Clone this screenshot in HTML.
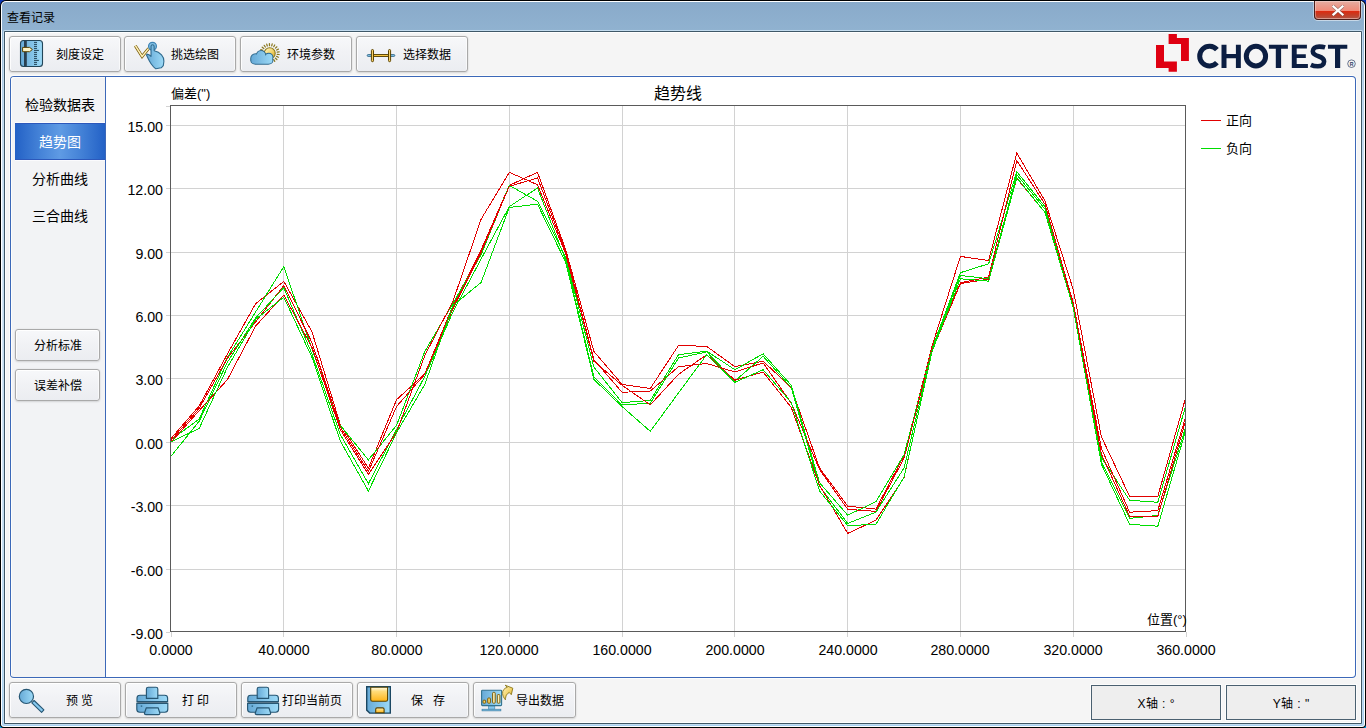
<!DOCTYPE html>
<html lang="zh-CN">
<head>
<meta charset="utf-8">
<title>查看记录</title>
<style>
html,body{margin:0;padding:0;}
body{width:1366px;height:728px;overflow:hidden;position:relative;background:linear-gradient(to bottom,#0a36b4 0,#0a36b4 50%,#00a2f0 50%,#00a2f0 100%);
  font-family:"Liberation Sans",sans-serif;font-size:12px;font-weight:300;color:#000;}
div,svg,span{position:absolute;}
/* ---------- window frame ---------- */
#w0{left:0;top:0;width:1366px;height:728px;background:#000;border-radius:6px 6px 4px 4px;}
#w1{left:1px;top:1px;width:1364px;height:726px;background:#fff;border-radius:5px 5px 3px 3px;}
#w2{left:2px;top:2px;width:1362px;height:724px;border-radius:4px 4px 2px 2px;
  background:linear-gradient(to bottom,#89aaca 0,#90b2d0 28px,#b4cfe8 90px,#d6e7f4 200px,#d2e5f4 480px,#a8d2f3 724px);}
#w3{left:3px;top:30px;width:1360px;height:695px;background:#c2dbee;border-radius:2px;}
#w4{left:4px;top:31px;width:1358px;height:693px;background:#3f5868;border-radius:1px;}
#client{left:5px;top:32px;width:1356px;height:691px;background:#f5f5f5;box-shadow:inset 0 0 0 1px #fff;}
#title{left:7px;top:10px;height:17px;line-height:17px;font-size:12px;white-space:nowrap;}
/* close button */
#close{left:1314px;top:1px;width:47px;height:19px;border:1px solid #4a1d1a;border-top:none;border-radius:0 0 4px 4px;
  background:linear-gradient(to bottom,#e5aea3 0,#ea9a8b 5px,#f18a78 9.6px,#df2a10 10px,#c9381f 13px,#b74d3a 16.5px,#cf7a68 18px);
  box-shadow:inset 0 0 0 1px rgba(255,255,255,.32),0 1px 0 0 rgba(255,255,255,.5),1px 0 0 0 rgba(255,255,255,.4),-1px 0 0 0 rgba(255,255,255,.4);box-sizing:border-box;}
#close svg{left:17px;top:3.6px;}
/* ---------- buttons ---------- */
.btn{height:36px;width:112px;border:1px solid #a9a9a9;border-radius:3px;box-sizing:border-box;
  background:linear-gradient(to bottom,#f7f8fa 0,#f1f2f5 45%,#ebedf1 100%);
  box-shadow:inset 0 1px 0 rgba(255,255,255,.95),inset 1px 0 0 rgba(255,255,255,.85),inset -1px 0 0 rgba(255,255,255,.6),0 1px 2px rgba(0,0,0,.11),0 0 2px rgba(0,0,0,.08);}
.btn span{top:1px;height:34px;line-height:35px;white-space:nowrap;font-size:12px;}
.btn svg{left:0;top:0;}
.sb{left:15px;width:85px;height:32px;}
.sb span{left:0;width:83px;text-align:center;height:30px;line-height:31px;}
/* ---------- main panel ---------- */
#panelo{left:9px;top:75px;width:1348px;height:604px;border-radius:5px;background:#fdfdfb;}
#panel{left:10px;top:76px;width:1346px;height:602px;border-radius:4px;background:#3c68b8;}
#side{left:11px;top:77px;width:94px;height:600px;background:#f2f3f5;border-radius:3px 0 0 3px;box-shadow:inset 1px 1px 0 #fdfdfb;}
#main{left:106px;top:77px;width:1249px;height:600px;background:#fff;border-radius:0 3px 3px 0;}
.nav{left:15px;width:90px;height:37px;line-height:39px;text-align:center;font-size:14px;}
.nav.sel{color:#fff;background:linear-gradient(to right,#2361c6 0,#4482d7 27%,#5f9be4 50%,#4482d7 73%,#2361c6 100%);box-shadow:inset 0 1px 0 #2c58bb,inset 0 -1px 0 #2c58bb,0 -1px 0 #fbfbfd,0 1px 0 #fbfbfd;}
/* ---------- chart ---------- */
#chart{left:0;top:0;}
.g{stroke:#d2d2d2;stroke-width:1;shape-rendering:crispEdges;}
.f{fill:none;stroke:#5a5a5a;stroke-width:1;shape-rendering:crispEdges;}
.r{fill:none;stroke:#e10000;stroke-width:1;shape-rendering:crispEdges;}
.n{fill:none;stroke:#00dd00;stroke-width:1;shape-rendering:crispEdges;}
.yl{left:106px;width:57px;text-align:right;font-size:14.2px;height:16px;line-height:16px;}
.xl{top:642px;width:80px;text-align:center;font-size:14.2px;height:16px;line-height:16px;}
.cj{font-size:13px;white-space:nowrap;height:16px;line-height:16px;}
.axb{top:685px;height:35px;width:130px;border:1px solid #4a6070;background:#eeeeee;box-sizing:border-box;
  text-align:center;line-height:37px;font-size:12px;box-shadow:0 0 0 1px #fcfcfc;}
.axb b{position:static;font-weight:inherit;padding:0 4.4px;}
</style>
</head>
<body>
<svg width="0" height="0" style="left:0;top:0"><defs><linearGradient id="gb" x1="0" x2="1" y1="0" y2="0"><stop offset="0" stop-color="#66a9d6"/><stop offset="1" stop-color="#9ddaf7"/></linearGradient><linearGradient id="gy" x1="0" x2="0" y1="0" y2="1"><stop offset="0" stop-color="#fffbe6"/><stop offset=".3" stop-color="#ffdc7a"/><stop offset="1" stop-color="#ffb416"/></linearGradient><linearGradient id="gs" x1="0" x2="1" y1="0" y2="1"><stop offset="0" stop-color="#fff6c8"/><stop offset=".55" stop-color="#f2d368"/><stop offset="1" stop-color="#cf9f24"/></linearGradient><linearGradient id="gv" x1="0" x2="1" y1="0" y2="0"><stop offset="0" stop-color="#ffe9a0"/><stop offset="1" stop-color="#f0b82e"/></linearGradient></defs></svg>
<div id="w0"></div><div id="w1"></div><div id="w2"></div><div id="w3"></div><div id="w4"></div>
<div id="client"></div>
<div id="title">查看记录</div>
<div id="close"><svg width="12" height="11" viewBox="0 0 12 11"><path d="M1.5 1.5 L10.5 9.5 M10.5 1.5 L1.5 9.5" stroke="#5a5050" stroke-width="3.4" stroke-linecap="square" opacity=".55"/><path d="M1.5 1.5 L10.5 9.5 M10.5 1.5 L1.5 9.5" stroke="#fff" stroke-width="2.2" stroke-linecap="square"/></svg></div>

<!-- top toolbar -->
<div class="btn" style="left:9px;top:36px"><svg width="110" height="34" viewBox="10 37 110 34"><rect x="20.5" y="40.5" width="22" height="26" rx="3" fill="url(#gb)" stroke="#234558" stroke-width="1.1"/><rect x="24" y="41" width="2.8" height="25" fill="#2a4050"/><path d="M34 42.4H37.0M34 44.4H37.0M34 46.4H37.0M34 48.4H37.0M34 50.4H38.9M34 52.4H37.0M34 54.4H37.0M34 56.4H37.0M34 58.4H37.0M34 60.4H38.9M34 62.4H37.0M34 64.4H37.0" stroke="#234558" stroke-width="1"/><path d="M22.6 47.4H29.6L32.4 49.5L29.6 51.7H22.6Z" fill="#fff4c6" stroke="#5a4300" stroke-width="1" stroke-linejoin="round"/></svg><span style="left:46px">刻度设定</span></div>
<div class="btn" style="left:124px;top:36px"><svg width="110" height="34" viewBox="125 37 110 34"><path d="M135.3 45.7L142.1 56.5L148.7 48.4" fill="none" stroke="#7a5c0a" stroke-width="3" stroke-linejoin="miter"/><path d="M135.3 45.7L142.1 56.5L148.7 48.4" fill="none" stroke="#fff2b8" stroke-width="1.5" stroke-linejoin="miter"/><circle cx="152.5" cy="46.3" r="3.9" fill="#86c3e8" stroke="#3f84b4" stroke-width="1.3"/><path d="M146.8 54.1C148.4 54.2 150 55.2 151 56.4L151 46.3C151 44.3 154.1 44.3 154.1 46.3L154.2 50.8C156.4 51.2 159.6 52.6 161.5 54.9C163.2 56.9 164.1 58.8 163.9 61.2L163.3 65.6L161.2 67.8L155.8 68.8L153.6 66.8C151.8 64.9 150.4 63 149.4 61C148.5 59.3 147.6 57.6 146.6 55.3Z" fill="url(#gb)" stroke="#2f6a8e" stroke-width="1.1" stroke-linejoin="round"/></svg><span style="left:46px">挑选绘图</span></div>
<div class="btn" style="left:240px;top:36px"><svg width="110" height="34" viewBox="241 37 110 34"><path d="M262.7 50.4L260.8 49.6M263.8 48.5L262.2 47.2M265.4 47.0L264.2 45.3M267.3 46.0L266.7 44.1M269.5 45.6L269.4 43.6M271.7 45.9L272.2 43.9M273.7 46.7L274.7 45.0M275.4 48.1L276.9 46.8M276.6 50.0L278.4 49.1M277.2 52.1L279.2 51.8M277.2 54.3L279.2 54.5M276.6 56.4L278.4 57.2M275.4 58.2L276.9 59.5M273.7 59.6L274.8 61.3" stroke="#8a7820" stroke-width="1.25" stroke-linecap="round"/><circle cx="269.7" cy="53.2" r="5.5" fill="url(#gs)" stroke="#8f7a1e" stroke-width="1.1"/><g fill="#2f6a8e" stroke="#2f6a8e" stroke-width="2"><circle cx="255.4" cy="58.5" r="4.2"/><circle cx="261.06" cy="55.3" r="4.2"/><circle cx="268.7" cy="57.4" r="3.75"/><rect x="251.3" y="57.2" width="21.1" height="6.5" rx="4.2" ry="3.2"/><rect x="255" y="56" width="13" height="5"/></g><clipPath id="cc"><circle cx="255.4" cy="58.5" r="4.2"/><circle cx="261.06" cy="55.3" r="4.2"/><circle cx="268.7" cy="57.4" r="3.75"/><rect x="251.3" y="57.2" width="21.1" height="6.5" rx="4.2" ry="3.2"/><rect x="255" y="56" width="13" height="5"/></clipPath><rect x="251" y="51" width="22" height="13" fill="url(#gb)" clip-path="url(#cc)"/></svg><span style="left:46px">环境参数</span></div>
<div class="btn" style="left:356px;top:36px"><svg width="110" height="34" viewBox="357 37 110 34"><rect x="367.2" y="54.6" width="27.6" height="1.8" rx=".9" fill="#8fcdf2" stroke="#2f6485" stroke-width=".9"/><rect x="373" y="54.55" width="16" height="1.9" fill="#f6c440" stroke="#5a4300" stroke-width=".9"/><rect x="371.4" y="49.5" width="2.1" height="12.2" rx="1.05" fill="url(#gv)" stroke="#5a4300" stroke-width="1"/><rect x="388.5" y="49.5" width="2.1" height="12.2" rx="1.05" fill="url(#gv)" stroke="#5a4300" stroke-width="1"/></svg><span style="left:46px">选择数据</span></div>

<svg width="220" height="46" viewBox="1146 30 220 46" style="left:1146px;top:30px"><path d="M1168.6 34.1H1176.9V38.1H1188.9V61.1H1181V43.9H1168.6Z" fill="#df0011"/><path d="M1156 44.9H1164V61.6H1176.9V71.7H1168.6V67.9H1156Z" fill="#df0011"/><g fill="none" stroke="#0b1e42"><path d="M1216.9 49.72A9.8 9.8 0 1 0 1216.9 62.58" stroke-width="5"/><ellipse cx="1255.95" cy="56.15" rx="9.65" ry="9.8" stroke-width="5"/><path d="M1325.1 47.4C1323.2 46.8 1321.2 46.6 1319.2 46.6C1315.2 46.6 1312.8 48.6 1312.8 51.3C1312.8 54.2 1315.4 55.3 1318.5 56.3C1321.6 57.3 1324.1 58.4 1324.1 61.5C1324.1 64.6 1321.4 66.3 1317.8 66.3C1315.2 66.3 1312.8 65.8 1310.9 64.9" stroke-width="4.6"/></g><g fill="#0b1e42"><path d="M1221.5 44.7h5v9.4h9.4v-9.4h4.95v23.2h-4.95v-9.7h-9.4v9.7h-5z"/><path d="M1268.9 44.7h19v3.95h-6.8v19.25h-5.3v-19.25h-6.9z"/><path d="M1291.8 44.7h15.1v3.9h-10.2v5.6h9.1v3.8h-9.1v6h11.2v3.9h-16.1z"/><path d="M1327.95 44.7h19.35v3.95h-7.1v19.25h-5.2v-19.25h-7.05z"/></g><circle cx="1351.5" cy="63.7" r="3.8" fill="none" stroke="#2c3c62" stroke-width=".7"/><text x="1349.7" y="65.6" font-family="Liberation Sans, sans-serif" font-weight="bold" font-size="5.2" fill="#2c3c62">R</text></svg>

<!-- main panel -->
<div id="panelo"></div><div id="panel"></div>
<div id="side"></div><div id="main"></div>
<div class="nav" style="top:86px">检验数据表</div>
<div class="nav sel" style="top:123px">趋势图</div>
<div class="nav" style="top:160px">分析曲线</div>
<div class="nav" style="top:197px">三合曲线</div>
<div class="btn sb" style="top:329px"><span>分析标准</span></div>
<div class="btn sb" style="top:369px"><span>误差补偿</span></div>

<!-- chart -->
<svg id="chart" width="1366" height="728" viewBox="0 0 1366 728">
<line x1="171" x2="1185" y1="125.5" y2="125.5" class="g"/>
<line x1="171" x2="1185" y1="188.5" y2="188.5" class="g"/>
<line x1="171" x2="1185" y1="252.5" y2="252.5" class="g"/>
<line x1="171" x2="1185" y1="315.5" y2="315.5" class="g"/>
<line x1="171" x2="1185" y1="378.5" y2="378.5" class="g"/>
<line x1="171" x2="1185" y1="442.5" y2="442.5" class="g"/>
<line x1="171" x2="1185" y1="505.5" y2="505.5" class="g"/>
<line x1="171" x2="1185" y1="569.5" y2="569.5" class="g"/>
<line x1="283.5" x2="283.5" y1="106" y2="631" class="g"/>
<line x1="396.5" x2="396.5" y1="106" y2="631" class="g"/>
<line x1="509.5" x2="509.5" y1="106" y2="631" class="g"/>
<line x1="622.5" x2="622.5" y1="106" y2="631" class="g"/>
<line x1="734.5" x2="734.5" y1="106" y2="631" class="g"/>
<line x1="847.5" x2="847.5" y1="106" y2="631" class="g"/>
<line x1="960.5" x2="960.5" y1="106" y2="631" class="g"/>
<line x1="1073.5" x2="1073.5" y1="106" y2="631" class="g"/>
<line x1="166" x2="170" y1="125.5" y2="125.5" class="g"/>
<line x1="166" x2="170" y1="188.5" y2="188.5" class="g"/>
<line x1="166" x2="170" y1="252.5" y2="252.5" class="g"/>
<line x1="166" x2="170" y1="315.5" y2="315.5" class="g"/>
<line x1="166" x2="170" y1="378.5" y2="378.5" class="g"/>
<line x1="166" x2="170" y1="442.5" y2="442.5" class="g"/>
<line x1="166" x2="170" y1="505.5" y2="505.5" class="g"/>
<line x1="166" x2="170" y1="569.5" y2="569.5" class="g"/>
<line x1="166" x2="170" y1="632.5" y2="632.5" class="g"/>
<line x1="166" x2="170" y1="106.5" y2="106.5" class="g"/>
<line x1="171.5" x2="171.5" y1="632" y2="637" class="g"/>
<line x1="283.5" x2="283.5" y1="632" y2="637" class="g"/>
<line x1="396.5" x2="396.5" y1="632" y2="637" class="g"/>
<line x1="509.5" x2="509.5" y1="632" y2="637" class="g"/>
<line x1="622.5" x2="622.5" y1="632" y2="637" class="g"/>
<line x1="734.5" x2="734.5" y1="632" y2="637" class="g"/>
<line x1="847.5" x2="847.5" y1="632" y2="637" class="g"/>
<line x1="960.5" x2="960.5" y1="632" y2="637" class="g"/>
<line x1="1073.5" x2="1073.5" y1="632" y2="637" class="g"/>
<line x1="1186.5" x2="1186.5" y1="632" y2="637" class="g"/>
<polyline class="r" points="171.0,438.5 199.2,406.0 227.4,354.0 255.6,303.7 283.8,281.4 312.0,331.8 340.2,424.4 368.4,468.1 396.6,399.6 424.8,373.9 452.9,305.6 481.1,249.9 509.3,185.4 537.5,172.3 565.7,249.7 593.9,351.5 622.1,384.4 650.3,388.5 678.5,345.4 706.7,346.4 734.9,366.7 763.1,361.2 791.3,387.6 819.5,467.9 847.7,506.1 875.9,509.1 904.1,455.4 932.2,345.6 960.4,256.4 988.6,260.6 1016.8,153.1 1045.0,200.9 1073.2,289.4 1101.4,436.8 1129.6,496.4 1157.8,496.4 1186.0,396.5"/>
<polyline class="n" points="171.0,440.0 199.2,418.9 227.4,357.4 255.6,312.0 283.8,266.6 312.0,349.2 340.2,425.2 368.4,459.9 396.6,425.2 424.8,351.5 452.9,303.5 481.1,254.7 509.3,185.4 537.5,201.3 565.7,257.1 593.9,367.1 622.1,402.6 650.3,400.5 678.5,354.7 706.7,351.1 734.9,369.7 763.1,353.8 791.3,385.3 819.5,482.7 847.7,515.2 875.9,501.7 904.1,454.6 932.2,347.9 960.4,272.7 988.6,263.8 1016.8,171.7 1045.0,206.8 1073.2,303.5 1101.4,457.5 1129.6,500.2 1157.8,502.3 1186.0,404.7"/>
<polyline class="r" points="171.0,440.4 199.2,408.3 227.4,358.2 255.6,321.9 283.8,285.6 312.0,342.6 340.2,426.9 368.4,471.5 396.6,406.4 424.8,374.3 452.9,308.8 481.1,252.4 509.3,186.3 537.5,178.0 565.7,251.8 593.9,359.7 622.1,392.3 650.3,391.0 678.5,366.7 706.7,363.5 734.9,372.0 763.1,362.9 791.3,403.2 819.5,469.4 847.7,509.3 875.9,511.4 904.1,458.0 932.2,348.7 960.4,282.8 988.6,277.1 1016.8,160.5 1045.0,204.2 1073.2,302.7 1101.4,448.4 1129.6,512.2 1157.8,510.6 1186.0,415.5"/>
<polyline class="n" points="171.0,456.3 199.2,421.2 227.4,362.3 255.6,317.9 283.8,287.7 312.0,354.0 340.2,434.3 368.4,483.7 396.6,429.4 424.8,376.4 452.9,312.0 481.1,259.0 509.3,206.6 537.5,188.0 565.7,260.2 593.9,377.0 622.1,404.9 650.3,403.2 678.5,358.0 706.7,351.9 734.9,381.1 763.1,356.3 791.3,387.6 819.5,486.3 847.7,523.4 875.9,512.2 904.1,467.9 932.2,349.4 960.4,275.4 988.6,278.8 1016.8,174.7 1045.0,209.1 1073.2,305.9 1101.4,461.5 1129.6,518.4 1157.8,515.4 1186.0,426.3"/>
<polyline class="r" points="171.0,442.3 199.2,410.6 227.4,379.6 255.6,326.1 283.8,295.1 312.0,347.5 340.2,429.4 368.4,474.4 396.6,432.0 424.8,355.5 452.9,301.4 481.1,219.2 509.3,172.3 537.5,184.8 565.7,253.9 593.9,361.2 622.1,385.3 650.3,404.9 678.5,374.3 706.7,354.7 734.9,380.2 763.1,372.0 791.3,407.5 819.5,485.2 847.7,533.4 875.9,520.3 904.1,477.6 932.2,350.4 960.4,283.5 988.6,279.2 1016.8,178.3 1045.0,212.5 1073.2,305.0 1101.4,454.2 1129.6,516.3 1157.8,516.3 1186.0,419.5"/>
<polyline class="n" points="171.0,441.9 199.2,428.4 227.4,367.3 255.6,319.4 283.8,297.2 312.0,357.4 340.2,440.8 368.4,491.1 396.6,432.6 424.8,384.4 452.9,305.6 481.1,282.4 509.3,207.4 537.5,204.2 565.7,262.3 593.9,379.4 622.1,406.6 650.3,431.3 678.5,392.9 706.7,354.7 734.9,382.3 763.1,369.7 791.3,402.6 819.5,490.9 847.7,525.6 875.9,524.3 904.1,477.0 932.2,351.1 960.4,278.8 988.6,281.1 1016.8,177.6 1045.0,212.5 1073.2,307.5 1101.4,464.1 1129.6,524.3 1157.8,526.2 1186.0,429.4"/>
<rect x="170.5" y="105.5" width="1015" height="526" class="f"/>
<line x1="1201" x2="1221" y1="120.5" y2="120.5" class="r"/>
<line x1="1201" x2="1221" y1="148.5" y2="148.5" class="n"/>
</svg>
<div class="yl" style="top:119px">15.00</div>
<div class="yl" style="top:182px">12.00</div>
<div class="yl" style="top:246px">9.00</div>
<div class="yl" style="top:309px">6.00</div>
<div class="yl" style="top:372px">3.00</div>
<div class="yl" style="top:436px">0.00</div>
<div class="yl" style="top:499px">-3.00</div>
<div class="yl" style="top:563px">-6.00</div>
<div class="yl" style="top:626px">-9.00</div>
<div class="xl" style="left:131px">0.0000</div>
<div class="xl" style="left:244px">40.0000</div>
<div class="xl" style="left:357px">80.0000</div>
<div class="xl" style="left:469px">120.0000</div>
<div class="xl" style="left:582px">160.0000</div>
<div class="xl" style="left:695px">200.0000</div>
<div class="xl" style="left:808px">240.0000</div>
<div class="xl" style="left:920px">280.0000</div>
<div class="xl" style="left:1033px">320.0000</div>
<div class="xl" style="left:1146px">360.0000</div>
<div class="cj" style="left:171px;top:86px">偏差(&quot;)</div>
<div class="cj" style="left:628px;top:84px;width:100px;text-align:center;font-size:16px;height:20px;line-height:20px">趋势线</div>
<div class="cj" style="left:1147px;top:612px">位置(°)</div>
<div class="cj" style="left:1226px;top:113px">正向</div>
<div class="cj" style="left:1226px;top:141px">负向</div>

<!-- bottom toolbar -->
<div class="btn" style="left:9px;top:682px"><svg width="110" height="34" viewBox="10 683 110 34"><path d="M31.8 702.9L41.6 712.3L43.9 709.9L34.1 700.5Z" fill="#86c8ee" stroke="#265673" stroke-width="1.1" stroke-linejoin="round"/><circle cx="26.4" cy="696.4" r="7.1" fill="url(#gb)" stroke="#265673" stroke-width="1.2"/></svg><span style="left:56px">预 览</span></div>
<div class="btn" style="left:125px;top:682px"><svg width="110" height="34" viewBox="126 683 110 34"><rect x="137.3" y="701.4" width="30" height="2" fill="#7f8f9a"/><path d="M137.0 701.6V698.1Q137.0 695.2 140.0 695.2H164.6Q167.6 695.2 167.6 698.1V701.6Z" fill="url(#gb)" stroke="#265673" stroke-width="1.15"/><path d="M136.8 703.3V709.2Q136.8 712.2 139.8 712.2H164.8Q167.8 712.2 167.8 709.2V703.3Z" fill="url(#gb)" stroke="#265673" stroke-width="1.15"/><path d="M146.4 698.3V689Q146.4 687.2 148.2 687.2H156.0Q157.8 687.2 157.8 689V698.3Z" fill="url(#gb)" stroke="#265673" stroke-width="1.15"/><path d="M146.3 707.8H158.1L159.9 713.2Q159.9 714.6 158.4 714.6H145.9Q144.4 714.6 144.4 713.2Z" fill="url(#gb)" stroke="#265673" stroke-width="1.15" stroke-linejoin="round"/><circle cx="141.5" cy="706.1" r=".9" fill="#35708f"/></svg><span style="left:56px">打 印</span></div>
<div class="btn" style="left:241px;top:682px"><svg width="110" height="34" viewBox="242 683 110 34"><rect x="248.1" y="701.4" width="30" height="2" fill="#7f8f9a"/><path d="M247.8 701.6V698.1Q247.8 695.2 250.8 695.2H275.4Q278.4 695.2 278.4 698.1V701.6Z" fill="url(#gb)" stroke="#265673" stroke-width="1.15"/><path d="M247.6 703.3V709.2Q247.6 712.2 250.6 712.2H275.6Q278.6 712.2 278.6 709.2V703.3Z" fill="url(#gb)" stroke="#265673" stroke-width="1.15"/><path d="M257.2 698.3V689Q257.2 687.2 259.0 687.2H266.8Q268.6 687.2 268.6 689V698.3Z" fill="url(#gb)" stroke="#265673" stroke-width="1.15"/><path d="M257.1 707.8H268.9L270.7 713.2Q270.7 714.6 269.2 714.6H256.7Q255.2 714.6 255.2 713.2Z" fill="url(#gb)" stroke="#265673" stroke-width="1.15" stroke-linejoin="round"/><circle cx="252.3" cy="706.1" r=".9" fill="#35708f"/></svg><span style="left:40px">打印当前页</span></div>
<div class="btn" style="left:357px;top:682px"><svg width="110" height="34" viewBox="358 683 110 34"><path d="M366.7 686.8H390.3V713.1H369.7L366.7 710.1Z" fill="url(#gb)" stroke="#1b4762" stroke-width="1.4" stroke-linejoin="miter"/><path d="M370.7 687.2V699.5Q370.7 701.3 372.5 701.3H385.8Q387.6 701.3 387.6 699.5V687.2Z" fill="url(#gy)" stroke="#5a4300" stroke-width="1.1"/><path d="M375.7 712.8V709.3Q375.7 707.9 377.1 707.9H382.7Q384.1 707.9 384.1 709.3V712.8Z" fill="url(#gy)" stroke="#5a4300" stroke-width="1.1"/></svg><span style="left:53px">保&nbsp;&nbsp;&nbsp;存</span></div>
<div class="btn" style="left:473px;top:682px;width:103px"><svg width="101" height="34" viewBox="474 683 101 34"><rect x="481.6" y="690.2" width="20" height="15.4" rx=".8" fill="url(#gb)" stroke="#33728f" stroke-width="1.1"/><rect x="488.4" y="706.2" width="6.4" height="3" fill="#86c8ee" stroke="#4585a8" stroke-width=".6"/><rect x="482" y="709.2" width="18.9" height="1.7" fill="#78bae0" stroke="#3a7a9e" stroke-width=".6"/><rect x="483" y="700.2" width="2.7" height="3" rx=".8" fill="#fbd462" stroke="#7a5e0c" stroke-width="1"/><rect x="487.7" y="698" width="2.7" height="5.2" rx=".8" fill="#fbd462" stroke="#7a5e0c" stroke-width="1"/><rect x="492.6" y="692.4" width="2.6" height="10.8" rx=".8" fill="#fff0b4" stroke="#7a5e0c" stroke-width="1"/><rect x="497.3" y="694.6" width="2.6" height="8.6" rx=".8" fill="#fff0b4" stroke="#7a5e0c" stroke-width="1"/><path d="M512.8 688.2L505.1 685.2L507.3 687.3C504.4 688.1 502.2 690.6 502.6 693.6C502.8 695.6 503.5 697.6 505.4 699.8C505.6 697.6 505.8 696.4 506.4 695.2C507 694 508 693 509.3 692.5L511.3 694.7Z" fill="url(#gs)" stroke="#8a7618" stroke-width=".9" stroke-linejoin="round"/></svg><span style="left:42px">导出数据</span></div>
<div class="axb" style="left:1091px">X轴<b>:</b>°</div>
<div class="axb" style="left:1226px">Y轴<b>:</b>&quot;</div>
</body>
</html>
